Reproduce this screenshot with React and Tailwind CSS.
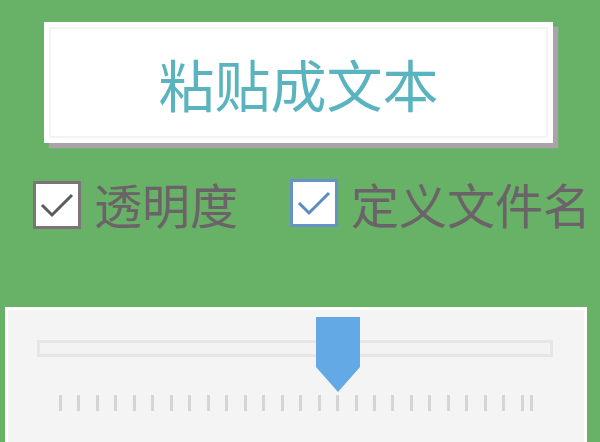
import React from "react";

const cjk = { fontFamily: '"Noto Sans CJK SC", "Noto Sans", sans-serif' };

function CheckBox({ border, tick }) {
  return (
    <div className={`w-[48px] h-[48px] bg-white border-[3px] ${border} flex items-center justify-center`}>
      <svg width="36" height="30" viewBox="0 0 36 30">
        <path d="M3 15 L13 25 L33 5" fill="none" stroke={tick} strokeWidth="3" />
      </svg>
    </div>
  );
}

export default function App() {
  const ticks = Array.from({ length: 26 });
  return (
    <div className="w-[600px] h-[442px] bg-[#68b268] overflow-hidden flex flex-col" style={cjk}>
      <div className="ml-[44px] mt-[22px] w-[509px] h-[121px] bg-white shadow-[5px_5px_1px_#aaa3a9] p-[5px]">
        <div className="w-full h-full border-2 border-[#f3f3f3] flex items-center justify-center">
          <span className="text-[56px] leading-none text-[#5ab4c0]">粘贴成文本</span>
        </div>
      </div>

      <div className="flex items-center mt-[34px] h-[52px]">
        <div className="ml-[33px] mt-[3px]">
          <CheckBox border="border-[#7d7379]" tick="#5e5a5c" />
        </div>
        <span className="ml-[13px] text-[48px] leading-none text-[#6b6367]">透明度</span>
        <div className="ml-[52px]">
          <CheckBox border="border-[#6792c8]" tick="#5b8ac4" />
        </div>
        <span className="ml-[13px] text-[48px] leading-none text-[#6b6367] whitespace-nowrap">定义文件名</span>
      </div>

      <div className="relative ml-[5px] mt-[78px] w-[582px] flex-1 bg-[#f4f4f4] border-[3px] border-b-0 border-white">
        <div className="ml-[29px] mt-[30px] w-[516px] h-[17px] border-[3px] border-[#e6e6e6] bg-[#f3f3f3]" />
        <div className="flex items-start ml-[51px] mt-[38px]">
          <div className="w-[465px] flex justify-between">
            {ticks.map((_, i) => (
              <div key={i} className="w-[3px] h-[16px] bg-[#d5d5d5]" />
            ))}
          </div>
          <div className="ml-[6px] w-[3px] h-[16px] bg-[#d5d5d5]" />
        </div>
        <svg className="absolute left-[307px] top-[6px]" width="46" height="78" viewBox="0 0 46 78">
          <path d="M1 1 H45 V51 L23 76 L1 51 Z" fill="#62a9e6" />
        </svg>
      </div>
    </div>
  );
}
